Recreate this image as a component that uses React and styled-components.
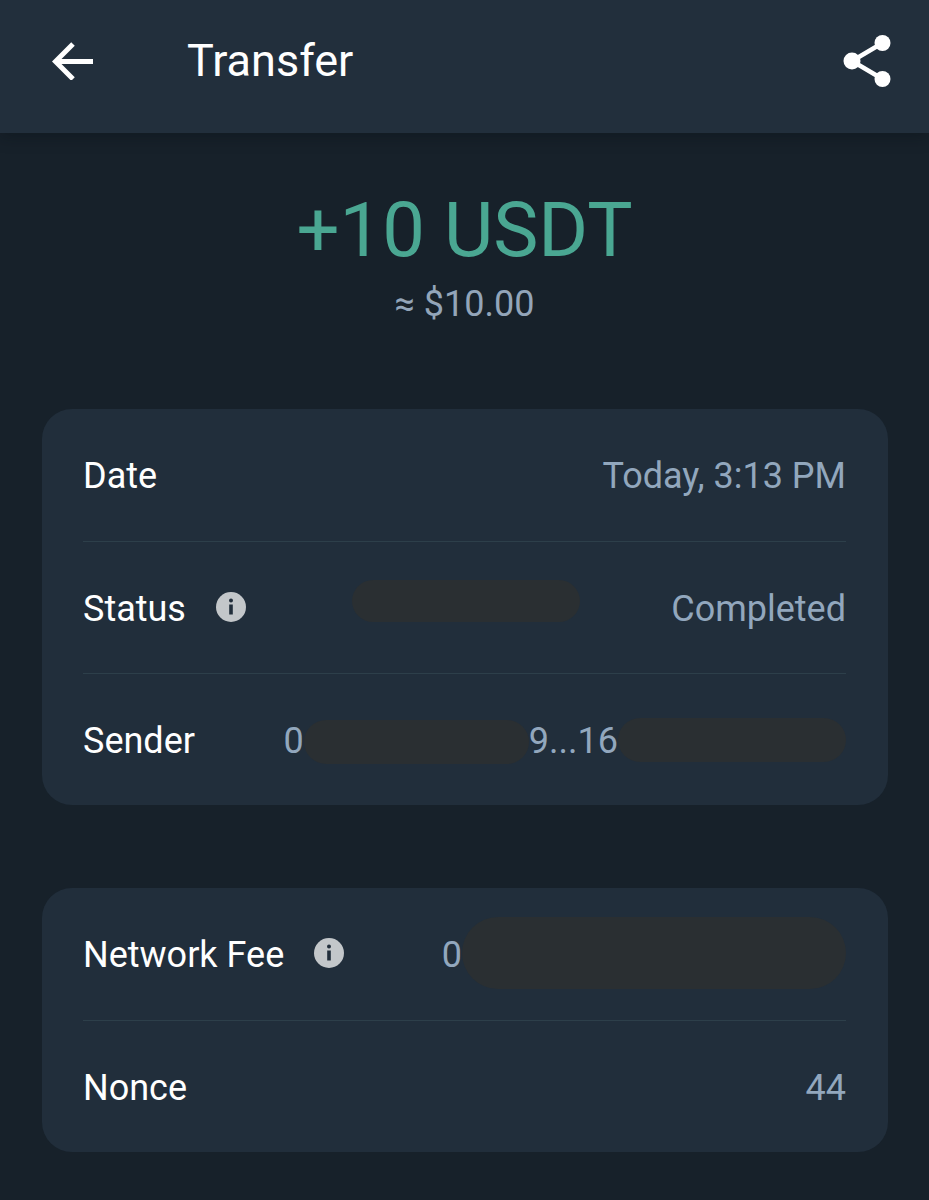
import React from "react";
import styled, { createGlobalStyle } from "styled-components";

const GlobalStyle = createGlobalStyle`
  html, body {
    margin: 0;
    padding: 0;
    background: #17212a;
    font-family: Roboto, "Liberation Sans", sans-serif;
  }
  * {
    box-sizing: border-box;
  }
`;

const Page = styled.div`
  width: 929px;
  height: 1200px;
  overflow: hidden;
  background: #17212a;
`;

const Header = styled.header`
  position: relative;
  display: flex;
  align-items: center;
  height: 133px;
  padding: 0 38px 12px 52px;
  background: #222f3c;
  box-shadow: 0 4px 14px rgba(10, 15, 20, 0.35);
`;

const Title = styled.h1`
  flex: 1;
  margin: 0 0 0 93px;
  color: #fff;
  font-size: 45px;
  font-weight: 400;
  line-height: 52px;
`;

const Summary = styled.section`
  display: flex;
  flex-direction: column;
  align-items: center;
  padding-top: 53px;
  margin-bottom: 84px;
`;

const Amount = styled.div`
  color: #4aa792;
  font-size: 76px;
  font-weight: 400;
  line-height: 88px;
`;

const Fiat = styled.div`
  margin-top: 9px;
  color: #93a5b9;
  font-size: 36px;
  line-height: 42px;
`;

const Card = styled.section`
  margin: 0 41px 83px 42px;
  padding: 0 42px 0 41px;
  background: #212e3b;
  border-radius: 30px;
`;

const Row = styled.div`
  position: relative;
  display: flex;
  align-items: center;
  justify-content: space-between;
  height: 132px;
  padding-top: 2px;
  border-top: ${p => (p.$first ? "none" : "1px solid #2d3f4a")};
`;

const Label = styled.div`
  display: flex;
  align-items: center;
  gap: 30px;
  color: #fff;
  font-size: 36px;
  line-height: 42px;

  svg {
    margin-top: -4px;
  }
`;

const Value = styled.div`
  display: flex;
  align-items: center;
  color: #92a7bd;
  font-size: 36px;
  line-height: 42px;
`;

const Blob = styled.span`
  display: block;
  width: ${p => p.$w}px;
  height: ${p => p.$h}px;
  margin-top: ${p => p.$shift || 0}px;
  border-radius: ${p => p.$h / 2}px;
  background: #2a2f32;
`;

const FloatingBlob = styled(Blob)`
  position: absolute;
  left: 269px;
  top: 38px;
`;

const InfoIcon = () => (
  <svg width="30" height="30" viewBox="0 0 30 30">
    <circle cx="15" cy="15" r="15" fill="#c3c7ca" />
    <circle cx="15" cy="8.5" r="2" fill="#212e3b" />
    <rect x="13.2" y="12.5" width="3.6" height="10" fill="#212e3b" />
  </svg>
);

const BackIcon = () => (
  <svg width="42" height="38" viewBox="0 0 42 38" fill="none" stroke="#fff" strokeWidth="5" style={{ display: "block" }}>
    <path d="M41 19.5H4" />
    <path d="M21 2 3.5 19.5 21 37" />
  </svg>
);

const ShareIcon = () => (
  <svg width="48" height="52" viewBox="0 0 48 52" fill="#fff" style={{ display: "block" }}>
    <path d="M39.5 8 9 26l30.5 18" fill="none" stroke="#fff" strokeWidth="4.5" />
    <circle cx="39.5" cy="8" r="8" />
    <circle cx="9" cy="26" r="8.5" />
    <circle cx="39.5" cy="44" r="8" />
  </svg>
);

export default function App() {
  return (
    <>
      <GlobalStyle />
      <Page>
        <Header>
          <BackIcon />
          <Title>Transfer</Title>
          <ShareIcon />
        </Header>
        <Summary>
          <Amount>+10 USDT</Amount>
          <Fiat>≈ $10.00</Fiat>
        </Summary>
        <Card>
          <Row $first>
            <Label>Date</Label>
            <Value>Today, 3:13 PM</Value>
          </Row>
          <Row>
            <Label>
              Status
              <InfoIcon />
            </Label>
            <FloatingBlob $w={228} $h={42} />
            <Value>Completed</Value>
          </Row>
          <Row>
            <Label>Sender</Label>
            <Value>
              0
              <Blob $w={225} $h={44} $shift={2} />
              9...16
              <Blob $w={228} $h={44} $shift={-2} />
            </Value>
          </Row>
        </Card>
        <Card>
          <Row $first>
            <Label>
              Network Fee
              <InfoIcon />
            </Label>
            <Value>
              0
              <Blob $w={384} $h={72} $shift={-4} />
            </Value>
          </Row>
          <Row>
            <Label>Nonce</Label>
            <Value>44</Value>
          </Row>
        </Card>
      </Page>
    </>
  );
}
